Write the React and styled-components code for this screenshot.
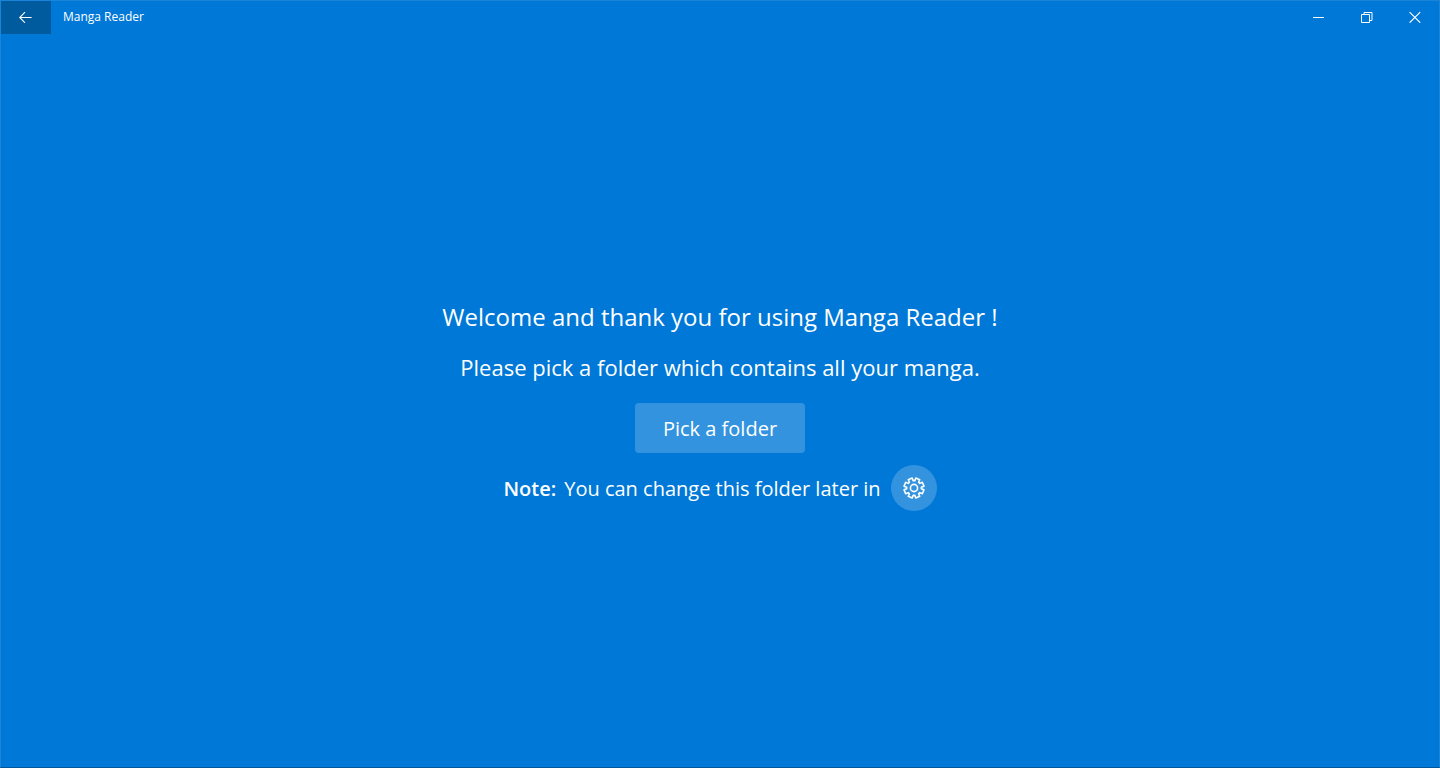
import styled, { createGlobalStyle } from 'styled-components';

const GlobalStyle = createGlobalStyle`
  * {
    box-sizing: border-box;
  }

  body {
    margin: 0;
    background: #0078d7;
  }
`;

const Window = styled.div`
  min-height: 100vh;
  display: flex;
  flex-direction: column;
  background: #0078d7;
  border: 1px solid #1a84d9;
  border-bottom-color: #00569b;
  color: #fff;
  font-family: 'Open Sans', 'Noto Sans', sans-serif;
`;

const TitleBar = styled.header`
  display: flex;
  height: 33px;
`;

const CaptionButton = styled.button`
  width: ${({ $back }) => ($back ? 50 : 48)}px;
  display: flex;
  align-items: center;
  justify-content: center;
  padding: 0 0 2px;
  border: none;
  background: ${({ $back }) => ($back ? '#005a9e' : 'transparent')};
  color: inherit;
`;

const AppTitle = styled.span`
  flex: 1;
  padding-left: 12px;
  font-size: 12px;
  line-height: 32px;
`;

const Content = styled.main`
  flex: 1;
  display: flex;
  flex-direction: column;
  align-items: center;
  justify-content: center;
  gap: 12px;
  padding-top: 8px;
`;

const Heading = styled.h1`
  margin: 0;
  padding-bottom: 2px;
  font-size: 24px;
  line-height: 36px;
  font-weight: 400;
`;

const Message = styled.p`
  margin: 0;
  padding-bottom: 6px;
  font-size: 22px;
  line-height: 36px;
`;

const PickButton = styled.button`
  height: 50px;
  padding: 2px 28px 0;
  border: none;
  border-radius: 4px;
  background: #3393df;
  color: inherit;
  font-family: inherit;
  font-size: 20px;
  line-height: 30px;
`;

const Note = styled.div`
  display: flex;
  align-items: center;
  gap: 10px;
  font-size: 20px;
  line-height: 30px;
`;

const NoteText = styled.span`
  padding-top: 2px;
`;

const NoteLabel = styled.strong`
  margin-right: 8px;
  font-weight: 600;
`;

const SettingsButton = styled.button`
  width: 46px;
  height: 46px;
  display: flex;
  align-items: center;
  justify-content: center;
  padding: 0;
  border: none;
  border-radius: 50%;
  background: #3393df;
  color: inherit;
`;

const Icon = styled.svg`
  display: block;
  fill: none;
  stroke: currentColor;
`;

// Eight teeth, with a gap at the top of the wheel
const gearPoints = Array.from({ length: 8 }, (_, i) => i * 45 + 22.5)
  .flatMap((tooth) => [
    [tooth - 16, 7.4],
    [tooth - 12, 10.1],
    [tooth + 12, 10.1],
    [tooth + 16, 7.4],
  ])
  .map(([angle, radius]) => {
    const rad = (angle * Math.PI) / 180;
    return `${(12 + radius * Math.sin(rad)).toFixed(2)},${(12 - radius * Math.cos(rad)).toFixed(2)}`;
  })
  .join(' ');

const BackIcon = () => (
  <Icon width="14" height="12" viewBox="0 0 14 12" strokeWidth="1.1">
    <path d="M12.6 6.5H0.8M6 1.2L0.7 6.5 6 11.8" />
  </Icon>
);

const MinimizeIcon = () => (
  <Icon width="12" height="11" viewBox="0 0 12 11">
    <path d="M0 6.5h11" />
  </Icon>
);

const RestoreIcon = () => (
  <Icon width="12" height="12" viewBox="0 0 12 12">
    <path d="M0.5 3.5h8v8h-8zM3 3.5V1.5h8v8H8.5" />
  </Icon>
);

const CloseIcon = () => (
  <Icon width="12" height="12" viewBox="0 0 12 12" strokeWidth="1.1">
    <path d="M0.6 1.1l10.6 10.6M11.2 1.1L0.6 11.7" />
  </Icon>
);

const GearIcon = () => (
  <Icon width="24" height="24" viewBox="0 0 24 24" strokeWidth="1.6" strokeLinejoin="round">
    <polygon points={gearPoints} />
    <circle cx="12" cy="12" r="3.6" />
  </Icon>
);

const App = () => {
  return (
    <>
      <GlobalStyle />
      <Window>
        <TitleBar>
          <CaptionButton $back aria-label="Back">
            <BackIcon />
          </CaptionButton>
          <AppTitle>Manga Reader</AppTitle>
          <CaptionButton aria-label="Minimize">
            <MinimizeIcon />
          </CaptionButton>
          <CaptionButton aria-label="Restore">
            <RestoreIcon />
          </CaptionButton>
          <CaptionButton aria-label="Close">
            <CloseIcon />
          </CaptionButton>
        </TitleBar>
        <Content>
          <Heading>Welcome and thank you for using Manga Reader !</Heading>
          <Message>Please pick a folder which contains all your manga.</Message>
          <PickButton>Pick a folder</PickButton>
          <Note>
            <NoteText>
              <NoteLabel>Note:</NoteLabel>
              You can change this folder later in
            </NoteText>
            <SettingsButton aria-label="Settings">
              <GearIcon />
            </SettingsButton>
          </Note>
        </Content>
      </Window>
    </>
  );
};

export default App;
